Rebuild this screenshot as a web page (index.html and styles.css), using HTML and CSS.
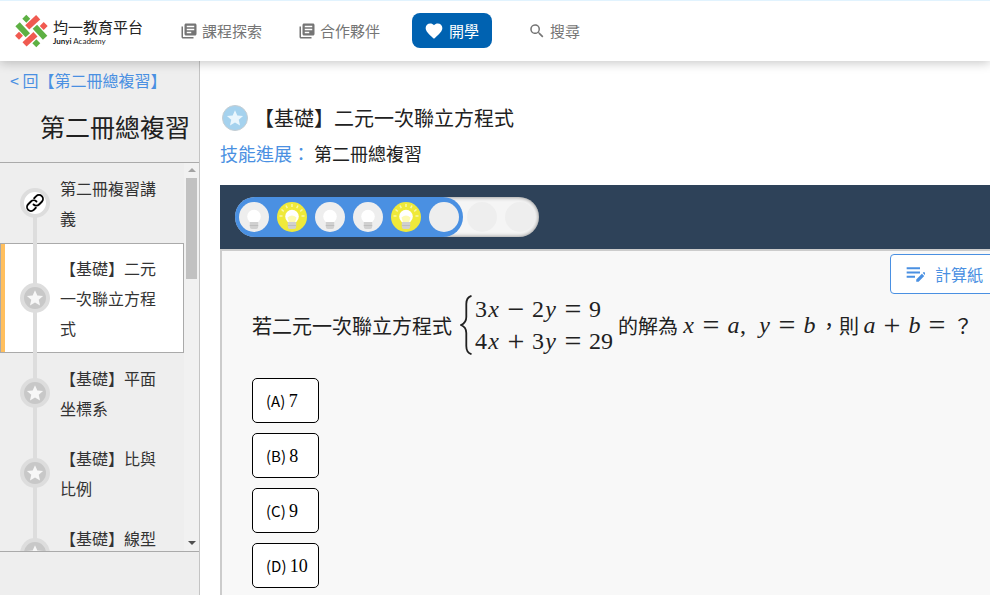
FILE: index.html
```html
<!DOCTYPE html>
<html lang="zh-Hant">
<head>
<meta charset="utf-8">
<title>均一教育平台</title>
<link rel="stylesheet" href="styles.css">
</head>
<body>
<svg class="defs" aria-hidden="true">
  <symbol id="star" viewBox="0 0 24 24"><path d="M12 1.5l3.1 7.1 7.7.7-5.8 5.1 1.7 7.6L12 18l-6.700 4 1.700-7.600-5.800-5.100 7.700-.7z" fill="currentColor"/></symbol>
  <symbol id="library" viewBox="0 0 24 24"><path fill="currentColor" d="M4 6H2v14c0 1.100.9 2 2 2h14v-2H4V6zm16-4H8c-1.100 0-2 .9-2 2v12c0 1.100.9 2 2 2h12c1.100 0 2-.9 2-2V4c0-1.100-.9-2-2-2zm-1 9H9V9h10v2zm-4 4H9v-2h6v2zm4-8H9V5h10v2z"/></symbol>
  <symbol id="bulb" viewBox="0 0 30 30"><circle cx="15" cy="14.500" r="6.800" fill="#fff"/><path d="M11 17h8v4h-8z" fill="#fff"/><path d="M10.800 20h8.400v4.500q0 2.500-2 2.500h-4.400q-2 0-2-2.500z" fill="#d0d0d0"/><path d="M10.800 23.500h8.400" stroke="#bebebe"/></symbol>
  <symbol id="bulb-on" viewBox="0 0 30 30"><path d="M15 2v3M9 3.500l1.300 2.600M21 3.500l-1.300 2.600M4.500 7.500l2.300 1.800M25.500 7.500l-2.300 1.800M2.500 14h3M27.500 14h-3" stroke="#faf7a8" stroke-width="1.500"/><circle cx="15" cy="14.500" r="6.800" fill="#fff"/><path d="M10.500 15.500q4.500-4 9 0l-1.500 5h-6z" fill="#fdfab4"/><path d="M10.800 20h8.400v4.500q0 2.500-2 2.500h-4.400q-2 0-2-2.500z" fill="#d0d0d0"/><path d="M10.800 23.500h8.400" stroke="#bebebe"/></symbol>
</svg>

<header class="topbar">
  <a class="brand" href="#">
    <svg class="brand-mark" viewBox="0 0 34 34" aria-hidden="true">
      <g fill="#f05a50">
        <path d="M-7.500-3h15v6h-15z" transform="translate(18.700 8.300) rotate(-43)"/>
        <path d="M-7.500-3h15v6h-15z" transform="translate(16 25.300) rotate(-43)"/>
        <path d="M-2.800-2.800h5.600v5.600h-5.600z" transform="translate(29.700 12) rotate(45)"/>
        <path d="M-2.800-2.800h5.600v5.600h-5.600z" transform="translate(5 21.700) rotate(45)"/>
      </g>
      <g fill="#5db043">
        <path d="M-7.500-3h15v6h-15z" transform="translate(8.700 15.700) rotate(47)"/>
        <path d="M-7.500-3h15v6h-15z" transform="translate(26 18.300) rotate(47)"/>
        <path d="M-2.800-2.800h5.600v5.600h-5.600z" transform="translate(12.300 4.700) rotate(45)"/>
        <path d="M-2.800-2.800h5.600v5.600h-5.600z" transform="translate(22.300 29.300) rotate(45)"/>
      </g>
    </svg>
    <span class="brand-text"><span class="brand-name">均一教育平台</span><span class="brand-en"><b>Junyi</b> Academy</span></span>
  </a>
  <nav class="nav">
    <a class="nav-link" href="#"><svg viewBox="0 0 24 24" aria-hidden="true"><use href="#library"/></svg>課程探索</a>
    <a class="nav-link" href="#"><svg viewBox="0 0 24 24" aria-hidden="true"><use href="#library"/></svg>合作夥伴</a>
    <a class="nav-link nav-cta" href="#"><svg viewBox="0 0 24 24" aria-hidden="true"><path fill="currentColor" d="M12 21.400l-1.500-1.300C5.400 15.400 2 12.300 2 8.500 2 5.400 4.400 3 7.500 3c1.700 0 3.400.8 4.500 2.100C13.100 3.800 14.800 3 16.500 3 19.600 3 22 5.400 22 8.500c0 3.800-3.400 6.900-8.600 11.500z"/></svg>開學</a>
    <a class="nav-link" href="#"><svg viewBox="0 0 24 24" aria-hidden="true"><path fill="currentColor" d="M15.500 14h-.8l-.3-.3A6.500 6.500 0 1 0 13.700 14.400l.3.3v.8l5 5 1.500-1.500zm-6 0a4.500 4.500 0 1 1 0-9 4.500 4.500 0 0 1 0 9z"/></svg>搜尋</a>
  </nav>
</header>

<div class="layout">
  <aside class="sidebar">
    <a class="back" href="#">&lt; 回【第二冊總複習】</a>
    <h2 class="side-title">第二冊總複習</h2>
    <div class="side-scroll">
      <ul class="steps">
        <li class="step first"><span class="rail"><span class="node link-node"><svg viewBox="0 0 24 24" aria-hidden="true"><g transform="rotate(-45 12 12)" fill="none" stroke="#000" stroke-width="2" stroke-linecap="round"><path d="M9 16.300H5.800a4.300 4.300 0 0 1 0-8.600H10a4.300 4.300 0 0 1 4.300 4.300"/><path d="M15 7.700h3.200a4.300 4.300 0 0 1 0 8.600H14A4.300 4.300 0 0 1 9.700 12"/></g></svg></span></span><a href="#">第二冊複習講義</a></li>
        <li class="step current"><span class="rail"><span class="node"><svg viewBox="0 0 24 24" aria-hidden="true"><use href="#star"/></svg></span></span><a href="#">【基礎】二元一次聯立方程式</a></li>
        <li class="step"><span class="rail"><span class="node"><svg viewBox="0 0 24 24" aria-hidden="true"><use href="#star"/></svg></span></span><a href="#">【基礎】平面坐標系</a></li>
        <li class="step"><span class="rail"><span class="node"><svg viewBox="0 0 24 24" aria-hidden="true"><use href="#star"/></svg></span></span><a href="#">【基礎】比與比例</a></li>
        <li class="step"><span class="rail"><span class="node"><svg viewBox="0 0 24 24" aria-hidden="true"><use href="#star"/></svg></span></span><a href="#">【基礎】線型<br>函數</a></li>
      </ul>
      <div class="scrollbar" aria-hidden="true"><i class="arrow up"></i><i class="thumb"></i><i class="arrow down"></i></div>
    </div>
  </aside>

  <main class="main">
    <h1 class="title"><span class="badge"><svg viewBox="0 0 24 24" aria-hidden="true"><use href="#star"/></svg></span>【基礎】二元一次聯立方程式</h1>
    <p class="subtitle"><span class="label">技能進展：</span> 第二冊總複習</p>

    <div class="progress-bar">
      <ol class="track">
        <li class="done"><svg class="dot"><use href="#bulb"/></svg></li>
        <li class="done"><svg class="dot lit"><use href="#bulb-on"/></svg></li>
        <li class="done"><svg class="dot"><use href="#bulb"/></svg></li>
        <li class="done"><svg class="dot"><use href="#bulb"/></svg></li>
        <li class="done"><svg class="dot lit"><use href="#bulb-on"/></svg></li>
        <li class="done last"><svg class="dot"></svg></li>
        <li><svg class="dot"></svg></li>
        <li><svg class="dot"></svg></li>
      </ol>
    </div>

    <section class="panel">
      <button class="scratch" type="button"><svg viewBox="0 0 24 24" aria-hidden="true"><path fill="currentColor" d="M2 4h16v2.400H2zM2 9h16v2.400H2zM2 14h10v2.400H2zM13.500 18.500l6.800-6.800 2.800 2.800-6.800 6.800h-2.800zM21.300 10.700l.8-.8q.6-.5 1.200 0l1.300 1.300q.5.6 0 1.200l-.8.8z"/></svg>計算紙</button>
      <div class="question">
        <span>若二元一次聯立方程式</span>
        <span class="system">
          <svg class="brace" viewBox="0 0 12 60" aria-hidden="true"><path d="M11.500.8C7 2 6.300 5 6.300 9v13c0 4-1.500 6.500-5.300 8 3.800 1.500 5.300 4 5.300 8v13c0 4 .7 7 5.200 8.200" fill="none" stroke="#212121" stroke-width="1.800"/></svg>
          <span class="rows">
            <span class="math">3<i>x</i><b>−</b>2<i>y</i><b>=</b>9</span>
            <span class="math">4<i>x</i><b>+</b>3<i>y</i><b>=</b>29</span>
          </span>
        </span>
        <span>的解為</span>
        <span class="math"><i>x</i><b>=</b><i>a</i>,&nbsp; <i>y</i><b>=</b><i>b</i></span>
        <span>，則</span>
        <span class="math tail"><i>a</i><b>+</b><i>b</i><b>=</b></span>
        <span>？</span>
      </div>
      <div class="choices">
        <button class="choice" type="button">(A) <span>7</span></button>
        <button class="choice" type="button">(B) <span>8</span></button>
        <button class="choice" type="button">(C) <span>9</span></button>
        <button class="choice" type="button">(D) <span>10</span></button>
      </div>
    </section>
  </main>
</div>
</body>
</html>
```
FILE: styles.css
```css
* { box-sizing: border-box; }
body {
  margin: 0;
  min-height: 100vh;
  display: flex;
  flex-direction: column;
  overflow: hidden;
  background: #fff;
  color: #212121;
  font-family: "Noto Sans CJK TC", sans-serif;
  font-size: 16px;
}
a { color: inherit; text-decoration: none; }
ul, ol { margin: 0; padding: 0; list-style: none; }
.defs { position: absolute; width: 0; height: 0; }

.topbar {
  position: relative;
  z-index: 2;
  display: flex;
  align-items: center;
  gap: 34px;
  height: 61px;
  padding: 0 14px;
  background: #fff;
  border-top: 1px solid #e1f3fe;
  box-shadow: 0 2px 10px rgba(0, 0, 0, 0.22);
}
.brand { display: flex; align-items: center; gap: 5px; color: #222; }
.brand-mark { width: 34px; height: 34px; }
.brand-text { display: flex; flex-direction: column; width: 93px; }
.brand-name { font-size: 15px; line-height: 20px; }
.brand-en { font-family: Lato, sans-serif; font-size: 8px; line-height: 8px; }
.nav { display: flex; align-items: center; padding-bottom: 1px; color: #757575; font-size: 15px; }
.nav-link { display: flex; align-items: center; gap: 4px; height: 35px; margin-right: 36px; }
.nav-link svg { width: 18px; height: 18px; }
.nav-cta { gap: 5px; padding: 0 13px 0 12px; margin-left: -4px; border-radius: 8px; background: #0062b1; color: #fff; }
.nav-cta svg { width: 20px; height: 20px; }

.layout { display: flex; flex: 1; }
.sidebar { flex: 0 0 200px; background: #eee; border-right: 1px solid #c4c4c4; }
.back { display: block; padding: 7px 10px 0; line-height: 24px; color: #4a90e2; white-space: nowrap; }
.side-title {
  margin: 0;
  padding: 15px 9px 17px;
  border-bottom: 1px solid #aaa;
  font-size: 25px;
  line-height: 38px;
  font-weight: 400;
  text-align: right;
}
.side-scroll { display: flex; height: 389px; border-bottom: 1px solid #aaa; overflow: hidden; }
.steps { flex: 1; color: #333; }
.step { display: flex; align-items: stretch; padding-right: 27px; }
.step a { flex: 1; padding: 10px 0; line-height: 30px; }
.rail {
  flex: 0 0 60px;
  display: flex;
  align-items: center;
  padding-left: 20px;
  background: linear-gradient(#ddd, #ddd) 33px 0 / 4px 100% no-repeat;
}
.first .rail { background-size: 4px 50%; background-position: 33px 100%; }
.current { background: #fff; box-shadow: inset 0 0 0 1px #aaa, inset 5px 0 0 #ffbf5e; }
.node {
  display: flex;
  align-items: center;
  justify-content: center;
  width: 30px;
  height: 30px;
  border: 4px solid #ddd;
  border-radius: 50%;
  background: #c8c8c8;
  color: #f7f7f7;
}
.node svg { width: 18px; height: 18px; }
.link-node { background: #fff; }
.link-node svg { flex: none; width: 22px; height: 22px; }
.scrollbar { flex: 0 0 15px; display: flex; flex-direction: column; align-items: center; background: #f1f1f1; }
.thumb { width: 11px; height: 101px; background: #c1c1c1; }
.arrow { border: 4px solid transparent; }
.up { margin: 3px 0 6px; border-top-width: 2px; border-bottom-color: #a3a3a3; }
.down { margin-top: auto; margin-bottom: 2px; border-top-color: #505050; }

.main { flex: 1; min-width: 0; display: flex; flex-direction: column; padding: 42px 0 0 20px; }
.title { display: flex; align-items: center; gap: 6px; margin: 0; padding-left: 2px; font-size: 20px; line-height: 30px; font-weight: 400; }
.badge {
  display: flex;
  align-items: center;
  justify-content: center;
  width: 26px;
  height: 26px;
  border: 1px solid #c5cdd2;
  border-radius: 50%;
  background: #a5d2ee;
  color: #eaf6fd;
}
.badge svg { width: 18px; height: 18px; }
.subtitle { margin: 7px 0 18px; font-size: 18px; line-height: 27px; }
.label { color: #4a90e2; }
.progress-bar { display: flex; padding: 12px 15px; background: #2e4259; }
.track {
  display: flex;
  border-radius: 20px;
  background: #f5f5f5;
  box-shadow: inset 0 0 4px rgba(0, 0, 0, 0.5);
  overflow: hidden;
}
.track li { display: flex; align-items: center; justify-content: center; width: 38px; height: 40px; }
.track .done { background: #4a90e2; }
.track .last { border-radius: 0 20px 20px 0; }
.dot { width: 30px; height: 30px; border-radius: 50%; background: #eee; }
.lit { background: #efe93a; }

.panel {
  flex: 1;
  padding: 3px 0 6px 30px;
  background: #f8f8f8;
  border-top: 2px solid #ccc;
  border-left: 2px solid #ccc;
}
.scratch {
  display: flex;
  align-items: center;
  gap: 10px;
  width: 112px;
  height: 40px;
  margin: 0 -12px 0 auto;
  padding: 0 14px;
  border: 1px solid #4a90e2;
  border-radius: 4px;
  background: #fff;
  color: #4a90e2;
  font: inherit;
  white-space: nowrap;
}
.scratch svg { width: 20px; height: 20px; flex: none; }
.question { display: flex; align-items: center; height: 62px; font-size: 20px; white-space: nowrap; }
.system { display: flex; align-items: center; margin: 0 5px 0 8px; gap: 3px; }
.brace { width: 12px; height: 60px; }
.rows { display: flex; flex-direction: column; }
.math { font-family: "Liberation Serif", serif; font-size: 24px; line-height: 32px; }
.math i { display: inline-block; width: 13px; text-align: center; }
.math b { display: inline-block; width: 32px; font-size: 30px; line-height: 24px; font-weight: 400; text-align: center; vertical-align: -2px; }
.question > .math { margin: 0 3px 0 4px; }
.question > .tail { margin-right: 0; }
.choices { display: flex; flex-direction: column; align-items: flex-start; gap: 10px; margin-top: 22px; }
.choice {
  width: 67px;
  height: 45px;
  padding: 0 13px;
  border: 1px solid #000;
  border-radius: 5px;
  background: #fff;
  color: #000;
  font: inherit;
  font-size: 15px;
  text-align: left;
  white-space: nowrap;
}
.choice span { font-family: "Liberation Serif", serif; font-size: 18px; }
```
